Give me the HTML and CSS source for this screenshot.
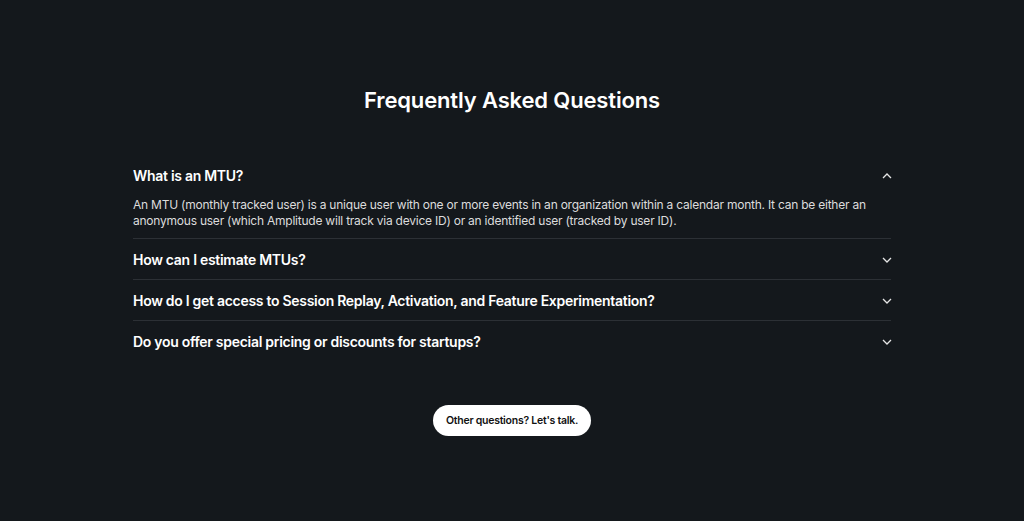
FILE: index.html
```html
<!DOCTYPE html>
<html>
<head>
<meta charset="utf-8">
<link rel="stylesheet" href="styles.css">
</head>
<body>
<section class="faq">
  <h2 class="title">Frequently Asked Questions</h2>
  <div class="list">
    <div class="item open">
      <div class="q"><span>What is an MTU?</span>
        <svg class="chev" width="10" height="6" viewBox="0 0 10 6"><path d="M1 5 L5 1 L9 5" fill="none" stroke="#e6e6e6" stroke-width="1.3"/></svg>
      </div>
      <p class="a">An MTU (monthly tracked user) is a unique user with one or more events in an organization within a calendar month. It can be either an anonymous user (which Amplitude will track via device ID) or an identified user (tracked by user ID).</p>
    </div>
    <div class="item">
      <div class="q"><span>How can I estimate MTUs?</span>
        <svg class="chev" width="10" height="6" viewBox="0 0 10 6"><path d="M1 1 L5 5 L9 1" fill="none" stroke="#e6e6e6" stroke-width="1.3"/></svg>
      </div>
    </div>
    <div class="item">
      <div class="q"><span>How do I get access to Session Replay, Activation, and Feature Experimentation?</span>
        <svg class="chev" width="10" height="6" viewBox="0 0 10 6"><path d="M1 1 L5 5 L9 1" fill="none" stroke="#e6e6e6" stroke-width="1.3"/></svg>
      </div>
    </div>
    <div class="item">
      <div class="q"><span>Do you offer special pricing or discounts for startups?</span>
        <svg class="chev" width="10" height="6" viewBox="0 0 10 6"><path d="M1 1 L5 5 L9 1" fill="none" stroke="#e6e6e6" stroke-width="1.3"/></svg>
      </div>
    </div>
  </div>
  <div class="cta"><a class="btn" href="#">Other questions? Let's talk.</a></div>
</section>
</body>
</html>
```
FILE: styles.css
```css
html, body {
  margin: 0;
  padding: 0;
  background: #14181c;
  height: 100%;
}
body {
  font-family: "Inter", "Liberation Sans", sans-serif;
  color: #fff;
}
.faq {
  width: 758px;
  margin: 0 auto;
  padding-top: 86px;
}
.title {
  margin: 0;
  text-align: center;
  font-size: 22px;
  line-height: 28px;
  font-weight: 600;
  letter-spacing: -0.15px;
  color: #fff;
}
.list {
  margin-top: 41px;
}
.item {
  border-bottom: 1px solid #2c3035;
  padding: 11px 0 9px;
}
.item:last-child {
  border-bottom: none;
}
.q {
  display: flex;
  justify-content: space-between;
  align-items: center;
  font-size: 14px;
  line-height: 20px;
  font-weight: 600;
  letter-spacing: -0.29px;
}
.chev {
  display: block;
  margin-right: -1px;
}
.a {
  margin: 11px 0 0;
  font-size: 12px;
  line-height: 16px;
  color: #dcdcdc;
  letter-spacing: -0.23px;
}
.cta {
  display: flex;
  justify-content: center;
  margin-top: 44px;
}
.btn {
  display: block;
  background: #fff;
  color: #111;
  text-decoration: none;
  font-size: 10.5px;
  font-weight: 600;
  line-height: 31px;
  height: 31px;
  padding: 0 12.5px;
  border-radius: 16px;
  letter-spacing: -0.25px;
}
```
